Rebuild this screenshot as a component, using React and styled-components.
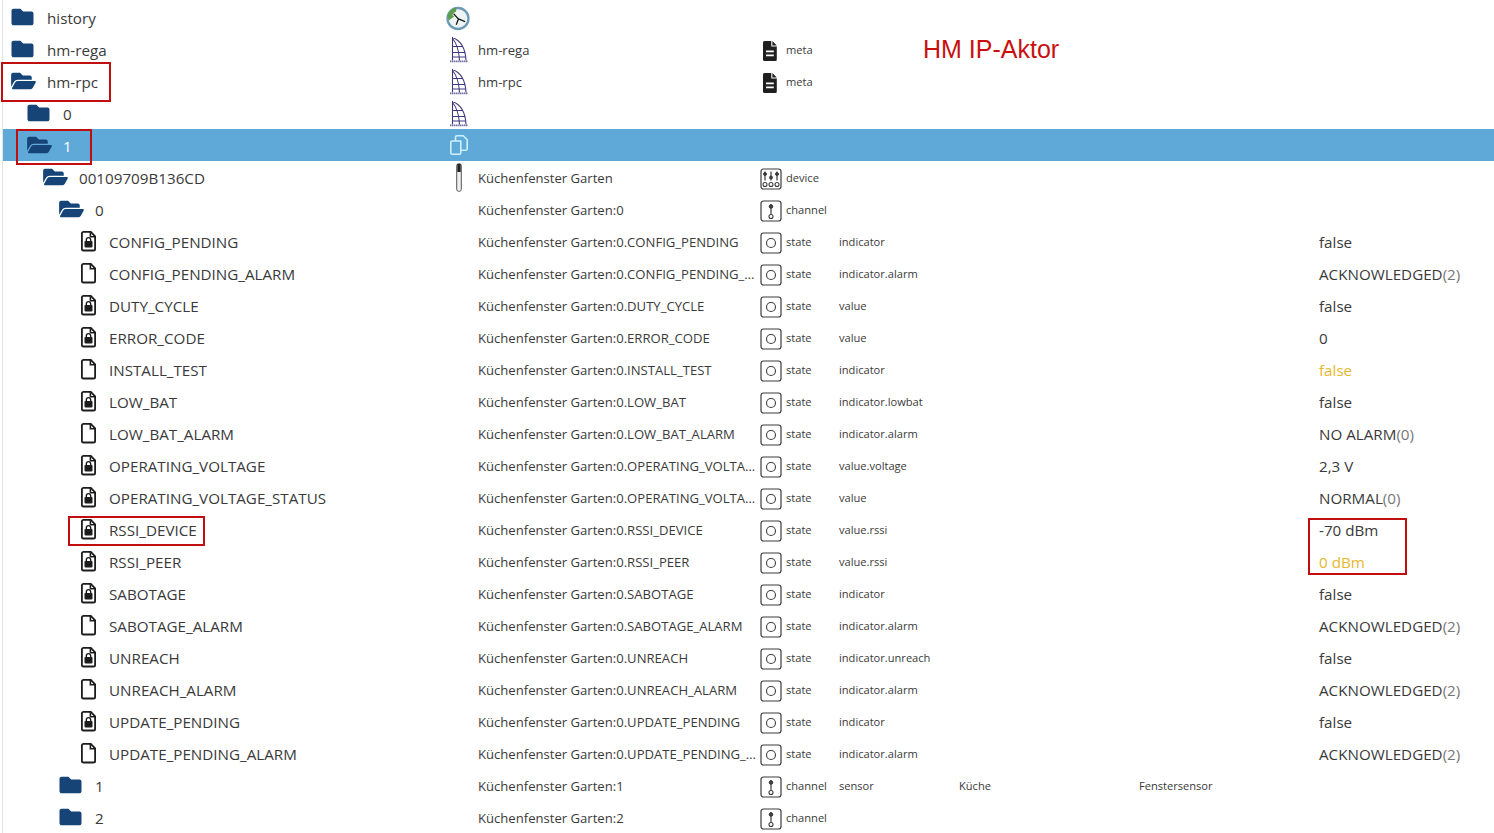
import React from "react";
import styled, { createGlobalStyle } from "styled-components";
import { FaFolder, FaFolderOpen } from "react-icons/fa";

const GlobalStyle = createGlobalStyle`
  html, body {
    margin: 0;
    padding: 0;
    height: 100%;
    overflow: hidden;
    background: #fff;
  }
  body {
    font-family: "Open Sans", "Noto Sans", "Liberation Sans", sans-serif;
    color: #3a3a3a;
  }
`

const Page = styled.div`
  position: relative;
  height: 833px;
  overflow: hidden;
  padding: 1px 0 0 3px;
  box-sizing: border-box;
  &::before {
    content: "";
    position: absolute;
    left: 2px;
    top: 0;
    bottom: 0;
    width: 1px;
    background: #e4e4e4;
  }
`

const Row = styled.div`
  display: grid;
  grid-template-columns: 444px 31px 282px 26px 53px 120px 180px 180px 1fr;
  height: 32px;
  align-items: center;
  background: ${props => props.selected ? "#5fa9d8" : "transparent"};
  color: ${props => props.selected ? "#fff" : "inherit"};
`

const TreeCell = styled.div`
  display: flex;
  align-items: center;
  padding-left: ${props => props.level * 16 + (props.leaf ? 14 : 8)}px;
`

const FolderIcon = styled.span`
  display: flex;
  width: 24px;
  height: 24px;
  color: #164477;
  margin-right: 12px;
  align-items: center;
  svg {
    flex-shrink: 0;
    width: ${props => props.open ? "25px" : "23px"};
    height: 22px;
  }
`

const FileIcon = styled.span`
  display: flex;
  width: 16px;
  height: 24px;
  margin-right: 12px;
  align-items: center;
`

const TreeName = styled.span`
  font-size: 15.2px;
  white-space: nowrap;
  padding-top: 1px;
`

const ObjIcon = styled.span`
  display: flex;
  align-items: center;
  width: 24px;
  height: 30px;
  padding-top: ${props => props.drop}px;
  margin-left: ${props => props.shift}px;
`

const NameCell = styled.span`
  font-size: 13.1px;
  white-space: nowrap;
  overflow: hidden;
  text-overflow: ellipsis;
  padding-top: 1px;
`

const TypeIcon = styled.span`
  display: flex;
  align-items: center;
  height: 24px;
  margin-top: 3px;
`

const SmallCell = styled.span`
  font-size: 11.1px;
  white-space: nowrap;
`

const ValueCell = styled.span`
  font-size: 15.2px;
  white-space: nowrap;
  padding-top: 1px;
  color: ${props => props.warn ? "#e6b72c" : "inherit"};
  span {
    color: #777;
  }
`

const RedBox = styled.div`
  position: absolute;
  left: ${props => props.x}px;
  top: ${props => props.y}px;
  width: ${props => props.w}px;
  height: ${props => props.h}px;
  border: 2px solid #c00d0d;
  box-sizing: border-box;
  pointer-events: none;
`

const Note = styled.div`
  position: absolute;
  left: 923px;
  top: 35px;
  font-family: "Liberation Sans", Arial, sans-serif;
  font-size: 25px;
  line-height: 28px;
  color: #c8100f;
`

const LockFile = ({ locked }) => (
  <svg width="16" height="22" viewBox="0 0 16 22">
    <path d="M2.500 1.800h7.300l4.300 4.500v12.600a1.600 1.600 0 0 1-1.600 1.600H2.500a1.600 1.600 0 0 1-1.600-1.600V3.400a1.600 1.600 0 0 1 1.600-1.600z" fill="none" stroke="#1c1c1c" strokeWidth="1.800" />
    <path d="M9.400 2v4.700h4.500" fill="none" stroke="#1c1c1c" strokeWidth="1.600" />
    {locked && <path d="M5.300 11.500V9.800a2.200 2.200 0 0 1 4.400 0v1.700" fill="none" stroke="#1c1c1c" strokeWidth="1.400" />}
    {locked && <rect x="3.500" y="11" width="8" height="6.400" rx=".8" fill="#1c1c1c" />}
  </svg>
);

const Clock = () => (
  <svg width="27" height="27" viewBox="0 0 27 27">
    <circle cx="13.500" cy="13.500" r="11.800" fill="#eef3f4" stroke="#6d9bb5" strokeWidth="2.600" />
    <path d="M14 14L8.500 8M14 14l7.500 3M14 14l-2.500 6.500" stroke="#1c1c1c" strokeWidth="1.500" fill="none" />
    <path d="M1.500 11.500A12.500 12.500 0 0 1 11 1L11.500 5.500A8 8 0 0 0 7 9.500L9.500 11 3.500 15.500z" fill="#5d9e4d" />
  </svg>
);

const Sail = () => (
  <svg width="18" height="27" viewBox="0 0 18 27">
    <path d="M2.500 1v23.500M2.500 1.500C10.500 4.500 15.500 13 16 24.500M2.500 2.500C6.500 7 9 15 9.500 24.500M2.500 10.500h9.700M2.500 16.500h12.300M2.500 21h13.300" fill="none" stroke="#3f3a80" strokeWidth="1.100" />
    <path d="M0 25.300h18" stroke="#6f6da3" strokeWidth="1.800" strokeDasharray="1.500 .5" />
  </svg>
);

const CopyIcon = () => (
  <svg width="18" height="20" viewBox="0 0 18 20">
    <path d="M10.800 6v11.800a1.400 1.400 0 0 1-1.400 1.400H2.200a1.400 1.400 0 0 1-1.400-1.400V7.400A1.400 1.400 0 0 1 2.200 6z" fill="none" stroke="#cdf1fb" strokeWidth="1.600" />
    <path d="M5.500 6V2.200A1.400 1.400 0 0 1 6.900.8h6.300l4 4v9a1.400 1.400 0 0 1-1.400 1.400h-5" fill="none" stroke="#cdf1fb" strokeWidth="1.600" />
  </svg>
);

const Sensor = () => (
  <svg width="6" height="29" viewBox="0 0 6 29">
    <rect x=".7" y=".7" width="4.600" height="27.600" rx="2" fill="#efefef" stroke="#555" />
    <rect x="1.300" y="1" width="3.400" height="8" fill="#222" />
  </svg>
);

const TypeFrame = ({ children }) => (
  <svg width="22" height="22" viewBox="0 0 22 22" fill="none" stroke="#3c3c3c">
    <rect x="1" y="1" width="20" height="20" rx="2.500" strokeWidth="1.200" />
    {children}
  </svg>
);

const DeviceIcon = () => (
  <TypeFrame>
    <path d="M5 3.500v9M11 3.500v9M17 3.500v9" strokeWidth="1.200" />
    <circle cx="5" cy="6" r="1.500" fill="#3c3c3c" />
    <circle cx="11" cy="9.500" r="1.500" fill="#3c3c3c" />
    <circle cx="17" cy="6" r="1.500" fill="#3c3c3c" />
    <circle cx="5" cy="16.500" r="2" strokeWidth="1.100" />
    <circle cx="11" cy="16.500" r="2" strokeWidth="1.100" />
    <circle cx="17" cy="16.500" r="2" strokeWidth="1.100" />
  </TypeFrame>
);

const ChannelIcon = () => (
  <TypeFrame>
    <path d="M11 4v10" strokeWidth="1.200" />
    <circle cx="11" cy="6.500" r="1.800" fill="#3c3c3c" />
    <circle cx="11" cy="16.500" r="2" strokeWidth="1.100" />
  </TypeFrame>
);

const StateIcon = () => (
  <TypeFrame>
    <circle cx="11" cy="11" r="4.500" strokeWidth="1.100" />
  </TypeFrame>
);

const MetaIcon = () => (
  <svg width="20" height="20" viewBox="0 0 20 20">
    <path d="M4.500 0h6.800v5.500h5.500v13a1.500 1.500 0 0 1-1.500 1.500H4.500A1.500 1.500 0 0 1 3 18.500v-17A1.500 1.500 0 0 1 4.500 0zM12.400 0l4.400 4.400h-4.400z" fill="#1f1f1f" />
    <path d="M6 10.300h7.800M6 14.300h7.800" stroke="#fff" strokeWidth="1.700" />
  </svg>
);

const typeIcons = {
  device: <DeviceIcon />,
  channel: <ChannelIcon />,
  state: <StateIcon />,
  meta: <MetaIcon />
}

const objIcons = {
  clock: { shift: -1, drop: 2, node: <Clock /> },
  sail: { shift: 3, drop: 1, node: <Sail /> },
  copy: { shift: 3, drop: 0, node: <CopyIcon /> },
  sensor: { shift: 9, drop: 1, node: <Sensor /> }
}

const dev = "Küchenfenster Garten";

const stateRows = [
  ["CONFIG_PENDING", true, "indicator", "false"],
  ["CONFIG_PENDING_ALARM", false, "indicator.alarm", "ACKNOWLEDGED", "(2)"],
  ["DUTY_CYCLE", true, "value", "false"],
  ["ERROR_CODE", true, "value", "0"],
  ["INSTALL_TEST", false, "indicator", "false", null, true],
  ["LOW_BAT", true, "indicator.lowbat", "false"],
  ["LOW_BAT_ALARM", false, "indicator.alarm", "NO ALARM", "(0)"],
  ["OPERATING_VOLTAGE", true, "value.voltage", "2,3 V"],
  ["OPERATING_VOLTAGE_STATUS", true, "value", "NORMAL", "(0)"],
  ["RSSI_DEVICE", true, "value.rssi", "-70 dBm"],
  ["RSSI_PEER", true, "value.rssi", "0 dBm", null, true],
  ["SABOTAGE", true, "indicator", "false"],
  ["SABOTAGE_ALARM", false, "indicator.alarm", "ACKNOWLEDGED", "(2)"],
  ["UNREACH", true, "indicator.unreach", "false"],
  ["UNREACH_ALARM", false, "indicator.alarm", "ACKNOWLEDGED", "(2)"],
  ["UPDATE_PENDING", true, "indicator", "false"],
  ["UPDATE_PENDING_ALARM", false, "indicator.alarm", "ACKNOWLEDGED", "(2)"]
]

const rows = [
  { level: 0, label: "history", icon: "clock" },
  { level: 0, label: "hm-rega", icon: "sail", name: "hm-rega", type: "meta" },
  { level: 0, label: "hm-rpc", open: true, icon: "sail", name: "hm-rpc", type: "meta" },
  { level: 1, label: "0", icon: "sail" },
  { level: 1, label: "1", open: true, icon: "copy", selected: true },
  { level: 2, label: "00109709B136CD", open: true, icon: "sensor", name: dev, type: "device" },
  { level: 3, label: "0", open: true, name: `${dev}:0`, type: "channel" },
  ...stateRows.map(([label, locked, role, value, suffix, warn]) => ({
    level: 4,
    leaf: true,
    label,
    locked,
    name: `${dev}:0.${label}`,
    type: "state",
    role,
    value,
    suffix,
    warn
  })),
  { level: 3, label: "1", name: `${dev}:1`, type: "channel", role: "sensor", room: "Küche", func: "Fenstersensor" },
  { level: 3, label: "2", name: `${dev}:2`, type: "channel" }
]

function TreeRow ({ row }) {
  const obj = objIcons[row.icon];
  return (
    <Row selected={row.selected}>
      <TreeCell level={row.level} leaf={row.leaf}>
        {row.leaf
          ? <FileIcon><LockFile locked={row.locked} /></FileIcon>
          : <FolderIcon open={row.open}>{row.open ? <FaFolderOpen /> : <FaFolder />}</FolderIcon>}
        <TreeName>{row.label}</TreeName>
      </TreeCell>
      <ObjIcon shift={obj ? obj.shift : 0} drop={obj ? obj.drop : 0}>{obj && obj.node}</ObjIcon>
      <NameCell>{row.name}</NameCell>
      <TypeIcon>{typeIcons[row.type]}</TypeIcon>
      <SmallCell>{row.type}</SmallCell>
      <SmallCell>{row.role}</SmallCell>
      <SmallCell>{row.room}</SmallCell>
      <SmallCell>{row.func}</SmallCell>
      <ValueCell warn={row.warn}>
        {row.value}{row.suffix && <span>{row.suffix}</span>}
      </ValueCell>
    </Row>
  )
}

export default function App () {
  return (
    <Page>
      <GlobalStyle />
      {rows.map((row, i) => <TreeRow row={row} key={i} />)}
      <Note>HM IP-Aktor</Note>
      <RedBox x={1} y={62} w={110} h={40} />
      <RedBox x={16} y={129} w={76} h={36} />
      <RedBox x={68} y={516} w={137} h={30} />
      <RedBox x={1308} y={518} w={99} h={57} />
    </Page>
  )
}
